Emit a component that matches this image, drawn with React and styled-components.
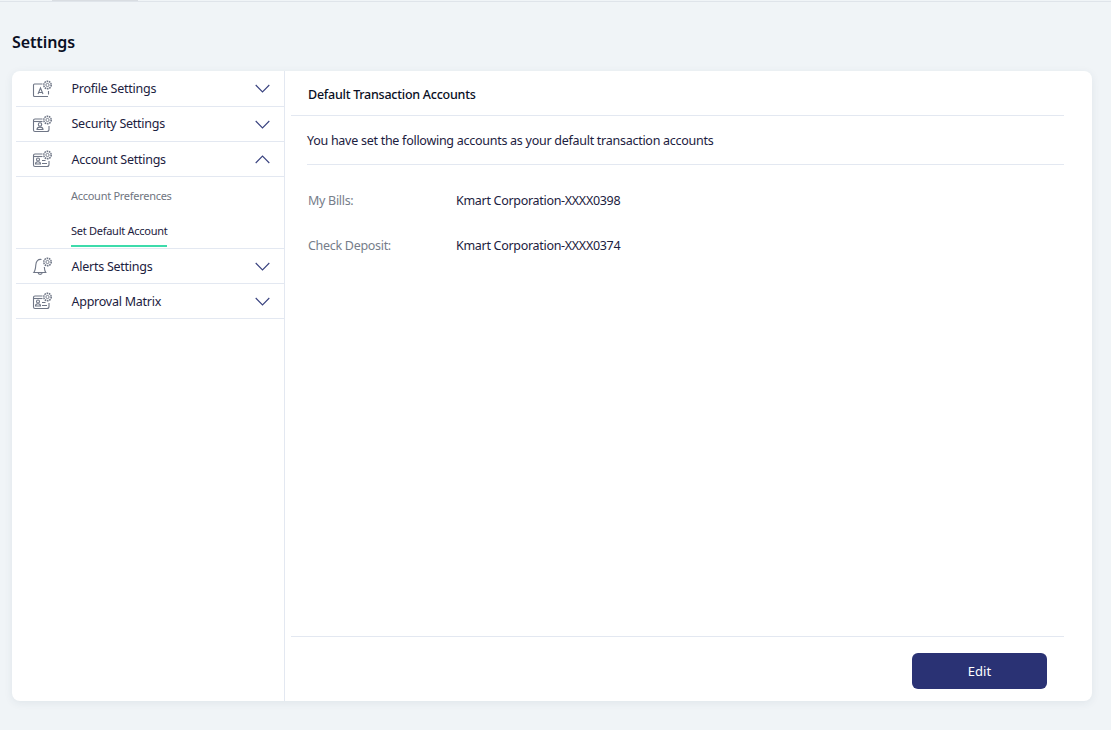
import React from "react";
import styled, { createGlobalStyle } from "styled-components";

const Global = createGlobalStyle`
  html, body { margin: 0; padding: 0; height: 100%; background: #f0f4f7; }
  body { font-family: "Noto Sans", "Open Sans", sans-serif; color: #0b1130; }
  * { box-sizing: border-box; }
`;

const Page = styled.div`
  width: 1111px;
  height: 730px;
  display: flex;
  flex-direction: column;
  overflow: hidden;
  background: #f0f4f7;
`;
const TopBar = styled.div`
  height: 2px;
  border-bottom: 1px solid #dfe4ea;
  padding-left: 52px;
`;
const TopTab = styled.div`
  width: 86px;
  height: 1px;
  background: #d9dde2;
`;
const Title = styled.h1`
  margin: 0;
  height: 69px;
  padding: 29px 0 0 12px;
  font-size: 16px;
  line-height: 22px;
  font-weight: 600;
  color: #0a0f24;
  letter-spacing: -0.1px;
`;
const Card = styled.div`
  margin-left: 12px;
  width: 1080px;
  height: 630px;
  background: #fff;
  border-radius: 8px;
  box-shadow: 0 2px 8px rgba(40, 60, 90, 0.08);
  display: flex;
`;
const Sidebar = styled.nav`
  width: 273px;
  padding-left: 4px;
  border-right: 1px solid #e3e8f1;
`;
const Row = styled.div`
  height: 35px;
  display: flex;
  align-items: center;
  border-bottom: 1px solid #e3e8f1;
  &:first-child { height: 36px; }
`;
const IconSlot = styled.span`
  width: 55.5px;
  padding-left: 16px;
  display: flex;
  flex: none;
  color: #6f7686;
`;
const RowLabel = styled.span`
  flex: 1;
  font-size: 12.5px;
  letter-spacing: -0.25px;
  color: #1c2140;
  margin-bottom: ${(p) => (p.$raised ? "2px" : "0")};
`;
const Chevron = styled.svg`
  width: 15px;
  height: 9px;
  margin-right: 14px;
  fill: none;
  stroke: #39427f;
  stroke-width: 1.1;
`;
const SubList = styled.div`
  height: 72px;
  padding-left: 55px;
  border-bottom: 1px solid #e3e8f1;
  display: flex;
  flex-direction: column;
`;
const SubItem = styled.a`
  align-self: flex-start;
  height: ${(p) => (p.$active ? "34px" : "36px")};
  padding-top: ${(p) => (p.$active ? "10px" : "11px")};
  font-size: 11px;
  line-height: 16px;
  letter-spacing: ${(p) => (p.$active ? "-0.27px" : "-0.28px")};
  color: ${(p) => (p.$active ? "#1c2140" : "#70757f")};
  border-bottom: ${(p) => (p.$active ? "2px solid #3ddbab" : "none")};
`;
const Main = styled.section`
  flex: 1;
  display: flex;
  flex-direction: column;
  padding: 0 28px 0 6px;
`;
const MainHeader = styled.div`
  height: 45px;
  padding: 15px 0 0 17px;
  border-bottom: 1px solid #e3e8f1;
  font-size: 12.5px;
  line-height: 18px;
  font-weight: 500;
  letter-spacing: -0.25px;
  color: #0a0f24;
`;
const Intro = styled.p`
  margin: 0 0 0 16px;
  height: 49px;
  padding-top: 15px;
  border-bottom: 1px solid #e3e8f1;
  font-size: 12.5px;
  line-height: 20px;
  letter-spacing: -0.27px;
  color: #1c2140;
`;
const Details = styled.dl`
  flex: 1;
  margin: 0;
  padding: 26px 0 0 17px;
  display: grid;
  grid-template-columns: 148px 1fr;
  grid-auto-rows: 45px;
  font-size: 12.5px;
  line-height: 20px;
  letter-spacing: -0.3px;
`;
const Term = styled.dt`
  color: #767d8a;
`;
const Value = styled.dd`
  margin: 0;
  color: #1c2140;
`;
const Footer = styled.div`
  height: 65px;
  border-top: 1px solid #e3e8f1;
  padding: 16px 17px 0 0;
  display: flex;
  justify-content: flex-end;
  align-items: flex-start;
`;
const EditButton = styled.button`
  width: 135px;
  height: 36px;
  border: 0;
  border-radius: 6px;
  background: #2a3274;
  color: #fff;
  font-family: inherit;
  font-size: 13px;
`;

const Gear = () => (
  <g>
    <circle cx="15.500" cy="5" r="1.600" strokeWidth="0.9" />
    <circle cx="15.500" cy="5" r="3.700" strokeDasharray="1.600 0.700" strokeWidth="1.600" />
  </g>
);

const IconBase = ({ children }) => (
  <svg width="22" height="18" viewBox="0 0 22 18" fill="none" stroke="currentColor" strokeWidth="1.100">
    {children}
    <Gear />
  </svg>
);

const ProfileIcon = () => (
  <IconBase>
    <path d="M10.500 4H2.500A1 1 0 0 0 1.500 5v10.500a1 1 0 0 0 1 1h13.500" />
    <path d="M6 14l2.500-6 2.500 6M7 12.500h3" />
    <path d="M16.500 11v3.500" />
  </IconBase>
);
const SecurityIcon = () => (
  <IconBase>
    <path d="M10.500 4H3a1.500 1.500 0 0 0-1.500 1.500v9.500A1.500 1.500 0 0 0 3 16.500h12a2 2 0 0 0 2-2V11" />
    <path d="M2 6.500h8.500" />
    <circle cx="8" cy="9.500" r="1.700" />
    <path d="M5 14.500c0-3.200 6-3.200 6 0z" />
  </IconBase>
);
const AccountIcon = () => (
  <IconBase>
    <path d="M10.500 4H3a1.500 1.500 0 0 0-1.500 1.500v9.500A1.500 1.500 0 0 0 3 16.500h12a2 2 0 0 0 2-2V11" />
    <path d="M2 6.500h8.500" />
    <circle cx="6" cy="9.500" r="1.500" />
    <path d="M3.500 14c0-3 5-3 5 0zM10 10.500h3.500M10 13.500h5" />
  </IconBase>
);
const BellIcon = () => (
  <IconBase>
    <path d="M9.500 2.500C6 2 4 4 3.800 8c-.2 3-.4 5.500-2 7.500h12c-.8-1-1.300-2.500-1.500-5.500" />
    <path d="M6 15.500c.3 2.500 4 2.500 4.300 0" />
  </IconBase>
);

const Down = () => (
  <Chevron viewBox="0 0 15 9"><path d="M.7 1l6.800 7 6.800-7" /></Chevron>
);
const Up = () => (
  <Chevron viewBox="0 0 15 9"><path d="M.7 8l6.800-7 6.800 7" /></Chevron>
);

const NavRow = ({ icon, label, open, raised }) => (
  <Row>
    <IconSlot>{icon}</IconSlot>
    <RowLabel $raised={raised}>{label}</RowLabel>
    {open ? <Up /> : <Down />}
  </Row>
);

export default function App() {
  return (
    <Page>
      <Global />
      <TopBar><TopTab /></TopBar>
      <Title>Settings</Title>
      <Card>
        <Sidebar>
          <NavRow icon={<ProfileIcon />} label="Profile Settings" />
          <NavRow icon={<SecurityIcon />} label="Security Settings" raised />
          <NavRow icon={<AccountIcon />} label="Account Settings" open />
          <SubList>
            <SubItem>Account Preferences</SubItem>
            <SubItem $active>Set Default Account</SubItem>
          </SubList>
          <NavRow icon={<BellIcon />} label="Alerts Settings" />
          <NavRow icon={<AccountIcon />} label="Approval Matrix" />
        </Sidebar>
        <Main>
          <MainHeader>Default Transaction Accounts</MainHeader>
          <Intro>You have set the following accounts as your default transaction accounts</Intro>
          <Details>
            <Term>My Bills:</Term>
            <Value>Kmart Corporation-XXXX0398</Value>
            <Term>Check Deposit:</Term>
            <Value>Kmart Corporation-XXXX0374</Value>
          </Details>
          <Footer><EditButton>Edit</EditButton></Footer>
        </Main>
      </Card>
    </Page>
  );
}
